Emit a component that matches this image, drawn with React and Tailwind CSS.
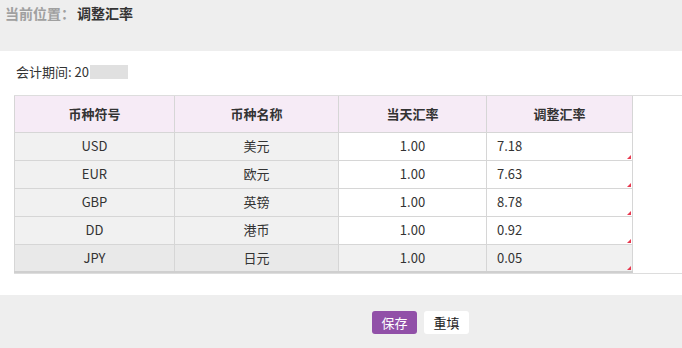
const rows = [
  { code: "USD", name: "美元", today: "1.00", adjust: "7.18" },
  { code: "EUR", name: "欧元", today: "1.00", adjust: "7.63" },
  { code: "GBP", name: "英镑", today: "1.00", adjust: "8.78" },
  { code: "DD", name: "港币", today: "1.00", adjust: "0.92" },
  { code: "JPY", name: "日元", today: "1.00", adjust: "0.05" },
];

export default function App() {
  return (
    <div
      className="w-[682px] h-[348px] bg-white text-[13px] text-[#333] overflow-hidden"
      style={{ fontFamily: '"Noto Sans CJK SC", "Noto Sans", sans-serif' }}
    >
      {/* 当前位置 */}
      <div className="h-[51px] bg-[#eeeeee] px-[5px] pt-[3px] leading-[20px] text-[14px] font-bold">
        <span className="text-[#a0a0a0]">当前位置：</span>
        <span className="ml-[2px]">调整汇率</span>
      </div>

      <div className="h-[244px]">
        <div className="pl-[16px] pt-[11px] h-[44px] flex items-start leading-[20px]">
          <span>会计期间: 20</span>
          <span className="ml-[1px] mt-[3px] w-[38px] h-[14px] bg-[#e0e0e0]"></span>
        </div>

        <div className="ml-[14px] border-t border-b border-[#dddddd]">
          <table className="table-fixed border-collapse w-[618px]">
            <colgroup>
              <col className="w-[160px]" />
              <col className="w-[164px]" />
              <col className="w-[148px]" />
              <col className="w-[146px]" />
            </colgroup>
            <thead>
              <tr className="h-[36px] bg-[#f6ebf6] font-bold">
                {["币种符号", "币种名称", "当天汇率", "调整汇率"].map((h) => (
                  <th key={h} className="border border-t-0 border-[#d6d6d6] font-bold text-center">
                    {h}
                  </th>
                ))}
              </tr>
            </thead>
            <tbody>
              {rows.map((r, i) => {
                const last = i === rows.length - 1;
                return (
                  <tr key={r.code} className="h-[28px]">
                    <td className={`border border-[#d6d6d6] text-center ${last ? "bg-[#e9e9e9] border-b-2 border-b-[#cfcfcf]" : "bg-[#f1f1f1]"}`}>
                      {r.code}
                    </td>
                    <td className={`border border-[#d6d6d6] text-center ${last ? "bg-[#e9e9e9] border-b-2 border-b-[#cfcfcf]" : "bg-[#f1f1f1]"}`}>
                      {r.name}
                    </td>
                    <td className={`border border-[#d6d6d6] text-center ${last ? "bg-[#f1f1f1] border-b-2 border-b-[#cfcfcf]" : "bg-white"}`}>
                      {r.today}
                    </td>
                    <td className={`relative border border-[#d6d6d6] pl-[10px] text-left align-top pt-[3px] ${last ? "bg-[#f1f1f1] border-b-2 border-b-[#cfcfcf]" : "bg-white"}`}>
                      {r.adjust}
                      <span className="absolute right-[1px] bottom-[1px] w-0 h-0 border-l-[4px] border-l-transparent border-b-[4px] border-b-[#e8384f]"></span>
                    </td>
                  </tr>
                );
              })}
            </tbody>
          </table>
        </div>
      </div>

      {/* 底部按钮 */}
      <div className="h-[53px] bg-[#eeeeee] flex items-center gap-[7px] pl-[372px] pt-[1px]">
        <button className="h-[23px] w-[45px] rounded-[3px] bg-[#9150a8] text-white text-[13px] leading-[23px]">
          保存
        </button>
        <button className="h-[23px] w-[45px] rounded-[3px] bg-white text-[#222] text-[13px] leading-[23px]">
          重填
        </button>
      </div>
    </div>
  );
}
